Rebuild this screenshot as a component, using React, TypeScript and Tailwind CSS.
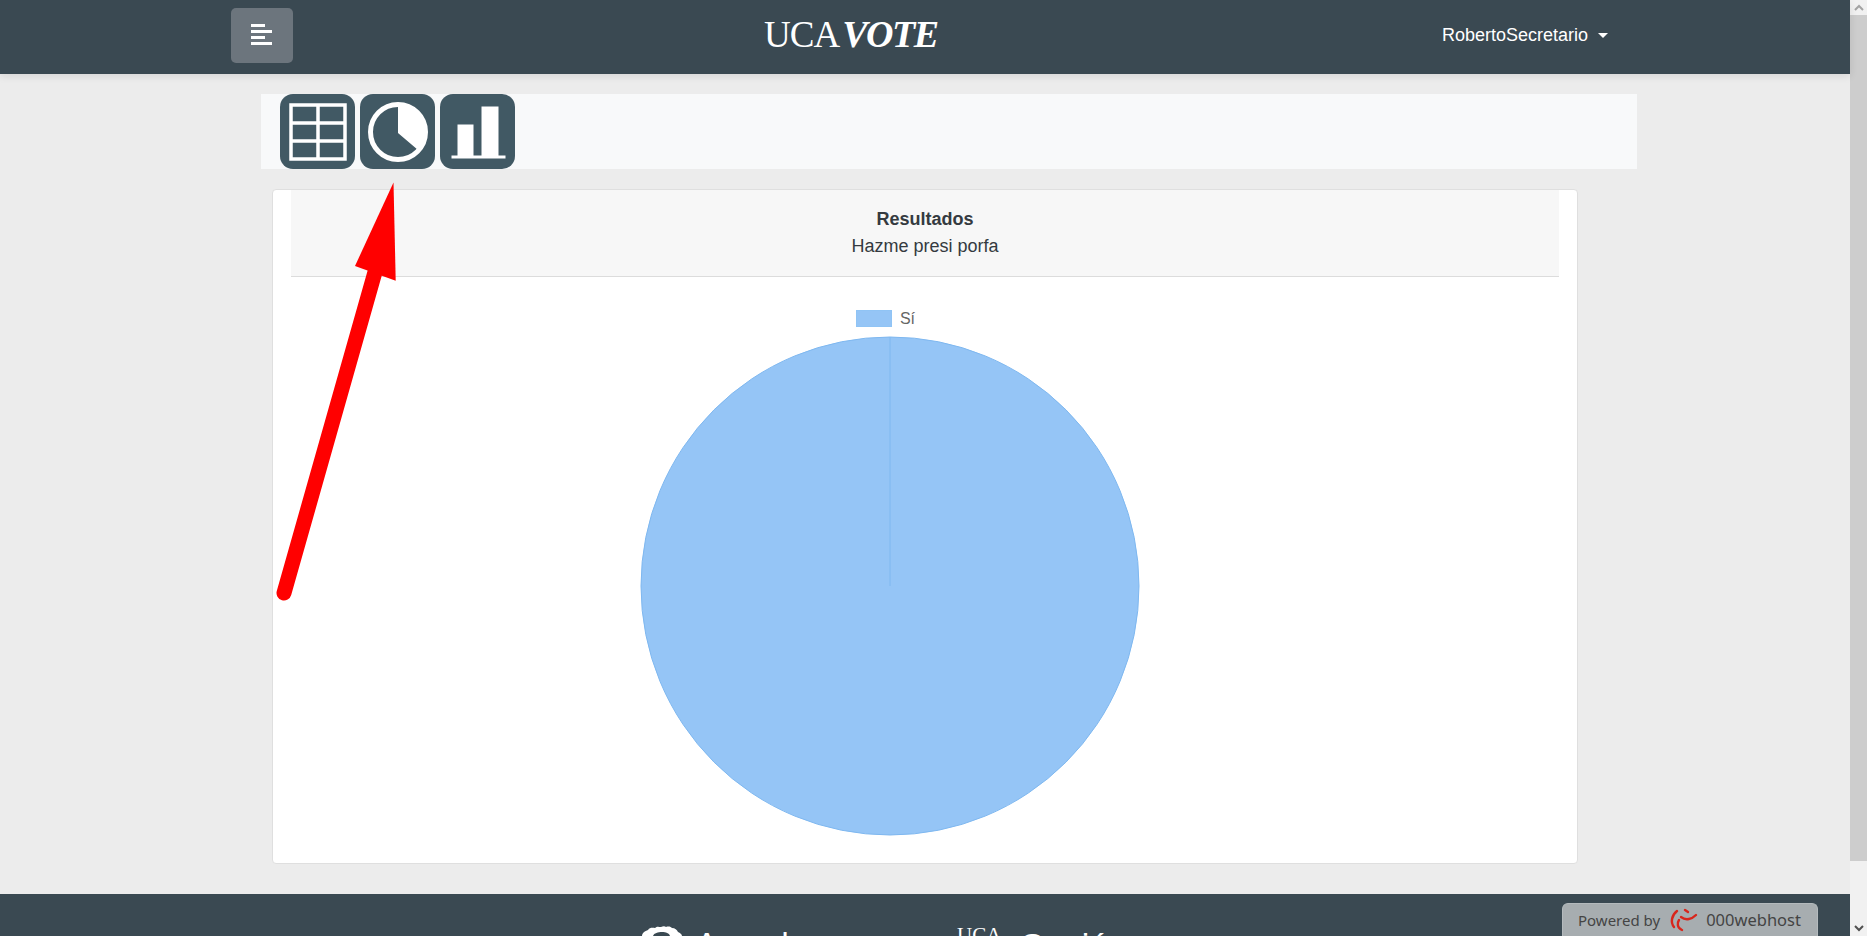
export default function App() {
  return (
    <div className="relative flex h-[936px] w-full overflow-hidden bg-[#ececec] font-['Liberation_Sans',Arial,sans-serif]">
      <div className="flex min-w-0 flex-1 flex-col">
        {/* Navbar */}
        <header className="relative flex h-[74px] shrink-0 items-center bg-[#3a4952] pb-[3px] shadow-[0_2px_8px_rgba(0,0,0,0.1)]">
          <div className="flex w-[231px] shrink-0" />
          <button className="flex h-[55px] w-[62px] shrink-0 items-center justify-center rounded-[5px] bg-[#6c757d]">
            <svg width="22" height="22" viewBox="0 0 22 22" fill="#fff" className="mb-[2px]">
              <rect x="0" y="0" width="14" height="3" />
              <rect x="0" y="6" width="21" height="3" />
              <rect x="0" y="12" width="14" height="3" />
              <rect x="0" y="18" width="21" height="3" />
            </svg>
          </button>
          <div className="mb-[3px] ml-[471px] flex w-[173px] shrink-0 items-baseline whitespace-nowrap text-white">
            <span className="font-['Liberation_Serif',serif] text-[37px] leading-none tracking-[-1px]">UCA</span>
            <span className="ml-[3px] font-['Liberation_Serif',serif] text-[38px] font-bold italic leading-none tracking-[-1.5px]">VOTE</span>
          </div>
          <div className="ml-[505px] flex items-center text-[18px] text-white">
            <span>RobertoSecretario</span>
            <span className="ml-[10px] h-0 w-0 border-x-[5px] border-t-[5px] border-x-transparent border-t-white" />
          </div>
        </header>

        <main className="flex flex-1 flex-col pl-[261px] pr-[213px] pt-[20px]">
          {/* Toolbar */}
          <div className="flex h-[75px] shrink-0 gap-[5px] bg-[#f8f9fa] pl-[19px]">
            <div className="flex h-[75px] w-[75px] items-center justify-center rounded-[13px] bg-[#415964]">
              <svg width="58" height="58" viewBox="0 0 58 58" fill="none" stroke="#fff" strokeWidth="3.5">
                <rect x="2" y="2" width="54" height="54" />
                <path d="M29 2V56M2 20H56M2 38H56" />
              </svg>
            </div>
            <div className="flex h-[75px] w-[75px] items-center justify-center rounded-[13px] bg-[#415964]">
              <svg width="60" height="60" viewBox="0 0 60 60">
                <circle cx="30" cy="30" r="27.5" fill="none" stroke="#fff" strokeWidth="5" />
                <path d="M30 3A27 27 0 0 1 50 48L30 31Z" fill="#fff" />
              </svg>
            </div>
            <div className="flex h-[75px] w-[75px] items-center justify-center rounded-[13px] bg-[#415964]">
              <svg width="56" height="56" viewBox="0 0 56 56" fill="#fff">
                <rect x="7.5" y="20.5" width="16" height="32" />
                <rect x="31.5" y="2.5" width="17" height="50" />
                <rect x="1.5" y="51.5" width="54" height="3" />
              </svg>
            </div>
          </div>

          {/* Card */}
          <section className="mt-[20px] ml-[11px] mr-[59px] flex h-[675px] shrink-0 flex-col rounded-[4px] border border-[#dfdfdf] bg-white px-[18px]">
            <div className="flex h-[87px] shrink-0 flex-col items-center justify-center border-b border-[#dcdcdc] bg-[#f7f7f7] pb-[1px] text-[#343a40]">
              <div className="text-[18px] font-bold leading-[28px]">Resultados</div>
              <div className="text-[18px] leading-[27px]">Hazme presi porfa</div>
            </div>
            <div className="flex flex-1 flex-col items-center pr-[71px] pt-[33px]">
              <div className="mr-[8px] flex h-[17px] items-center gap-[8px] text-[16px] text-[#666]">
                <span className="h-[17px] w-[36px] border border-[#90c4f5] bg-[#95c5f6]" />
                <span>Sí</span>
              </div>
              <svg width="500" height="500" viewBox="0 0 500 500" className="mt-[9px]">
                <circle cx="250" cy="250" r="249" fill="#95c5f6" stroke="#7fb8f0" strokeWidth="1" />
                <path d="M250 1V250" stroke="#7fb8f0" strokeWidth="1" />
              </svg>
            </div>
          </section>

          <div className="flex-1" />
        </main>

        {/* Footer: logos cut by the bottom edge of the window */}
        <footer className="relative flex h-[42px] shrink-0 overflow-hidden bg-[#3a4952] text-white">
          <div className="flex pl-[642px]">
            <svg width="40" height="10" viewBox="0 0 40 10" className="mt-[32px]">
              <path
                d="M0 10C0 7 3 5 6 4C8 1 11 2 13 2C15 0 17 1 19 1C21 0 23 0 24 1C27 0 29 1 30 2C33 2 35 4 36 6C38 7 40 8 40 10Z"
                fill="#fff"
              />
              <path d="M11 10C12 7 16 6 20 6C24 6 27 7 28 10Z" fill="#3a4952" />
            </svg>
            <span className="ml-[14px] mt-[34px] text-[32px] leading-none">Aprueba</span>
          </div>
          <div className="ml-[140px] flex">
            <span className="mt-[31px] font-['Liberation_Serif',serif] text-[21px] leading-none">UCA</span>
            <span className="ml-[18px] mt-[34px] text-[34px] leading-none">Opción</span>
          </div>
          <div className="absolute bottom-0 right-[32px] flex h-[33px] w-[256px] items-center gap-[8px] rounded-t-[6px] border border-b-0 border-[#b4babd] bg-[#a7adb0] pl-[15px] font-['Noto_Sans',sans-serif] text-[15px] text-[#444]">
            <span>Powered by</span>
            <svg width="30" height="26" viewBox="0 0 30 26" fill="none" stroke="#d8261c" strokeWidth="2.4" strokeLinecap="round">
              <path d="M6 20C2 15 4 8 9 4" />
              <path d="M14 23C9 21 9 16 11 13" />
              <path d="M13 10C18 14 24 12 28 8" />
              <path d="M17 3L20 5" />
            </svg>
            <span className="text-[16.5px]">000webhost</span>
          </div>
        </footer>
      </div>

      {/* Scrollbar */}
      <div className="flex w-[17px] shrink-0 flex-col bg-[#f1f1f1]">
        <div className="flex h-[15px] items-center justify-center">
          <svg width="10" height="7" viewBox="0 0 10 7" fill="none" stroke="#a3a3a3" strokeWidth="2">
            <path d="M1 6L5 2L9 6" />
          </svg>
        </div>
        <div className="h-[846px] bg-[#cdcdcd]" />
        <div className="flex-1" />
        <div className="flex h-[15px] items-center justify-center">
          <svg width="10" height="7" viewBox="0 0 10 7" fill="none" stroke="#505050" strokeWidth="2">
            <path d="M1 1L5 5L9 1" />
          </svg>
        </div>
      </div>

      {/* Annotation arrow drawn over the page */}
      <svg className="pointer-events-none absolute left-0 top-0" width="1867" height="936" viewBox="0 0 1867 936">
        <path d="M284 593L375 272" stroke="#ff0000" strokeWidth="15" strokeLinecap="round" fill="none" />
        <path d="M393.5 182.5L355 266L395.7 280.7Z" fill="#ff0000" />
      </svg>
    </div>
  );
}
